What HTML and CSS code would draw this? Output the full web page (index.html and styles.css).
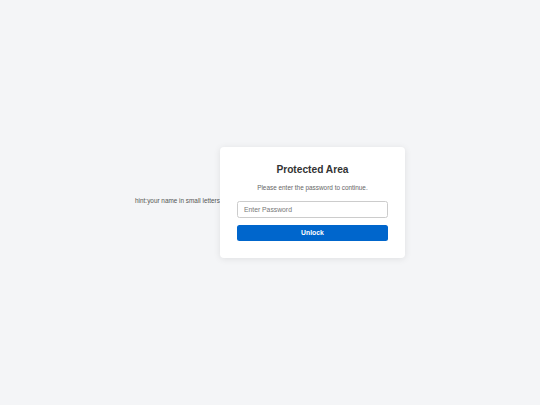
FILE: index.html
```html
<!DOCTYPE html>
<html lang="en">
<head>
    <meta charset="UTF-8">
    <meta name="viewport" content="width=device-width, initial-scale=1.0">
    <title>Protected Area</title>
    <link rel="stylesheet" href="styles.css">
</head>
<body>
    <p class="hint">hint:your name in small letters</p>
    <div class="lock-box">
        <h2>Protected Area</h2>
        <p class="lock-text">Please enter the password to continue.</p>
        <input type="password" id="password" placeholder="Enter Password">
        <button id="unlockBtn">Unlock</button>
    </div>
</body>
</html>
```
FILE: styles.css
```css
html, body {
    height: 100%;
}
body {
    font-family: "Liberation Sans", Arial, Helvetica, sans-serif;
    margin: 0;
    background-color: #f4f5f7;
    color: #333;
    display: flex;
    justify-content: center;
    align-items: center;
}
.hint {
    font-size: 6.4px;
    color: #555;
    margin: 0 0 4px;
}
.lock-box {
    background: #fff;
    width: 185px;
    box-sizing: border-box;
    padding: 17px 17px;
    border-radius: 4px;
    box-shadow: 0 1px 7px rgba(0, 0, 0, 0.09);
    text-align: center;
    display: flex;
    flex-direction: column;
}
.lock-box h2 {
    font-size: 10.2px;
    line-height: 12px;
    margin: 0 0 7.6px;
    color: #333;
}
.lock-text {
    font-size: 6.4px;
    line-height: 7.4px;
    margin: 0 0 9.8px;
    color: #666;
}
.lock-box input {
    height: 16.4px;
    box-sizing: border-box;
    padding: 0 6px;
    border: 0.5px solid #ccc;
    border-radius: 2.5px;
    font-family: inherit;
    font-size: 6.8px;
    color: #333;
    outline: none;
}
.lock-box input::placeholder {
    color: #777;
}
.lock-box button {
    margin-top: 7.6px;
    height: 15.6px;
    border: none;
    border-radius: 2.5px;
    background-color: #0066cc;
    color: #fff;
    font-family: inherit;
    font-size: 6.8px;
    font-weight: bold;
    cursor: pointer;
}
.lock-box button:hover {
    background-color: #0052a3;
}
```
